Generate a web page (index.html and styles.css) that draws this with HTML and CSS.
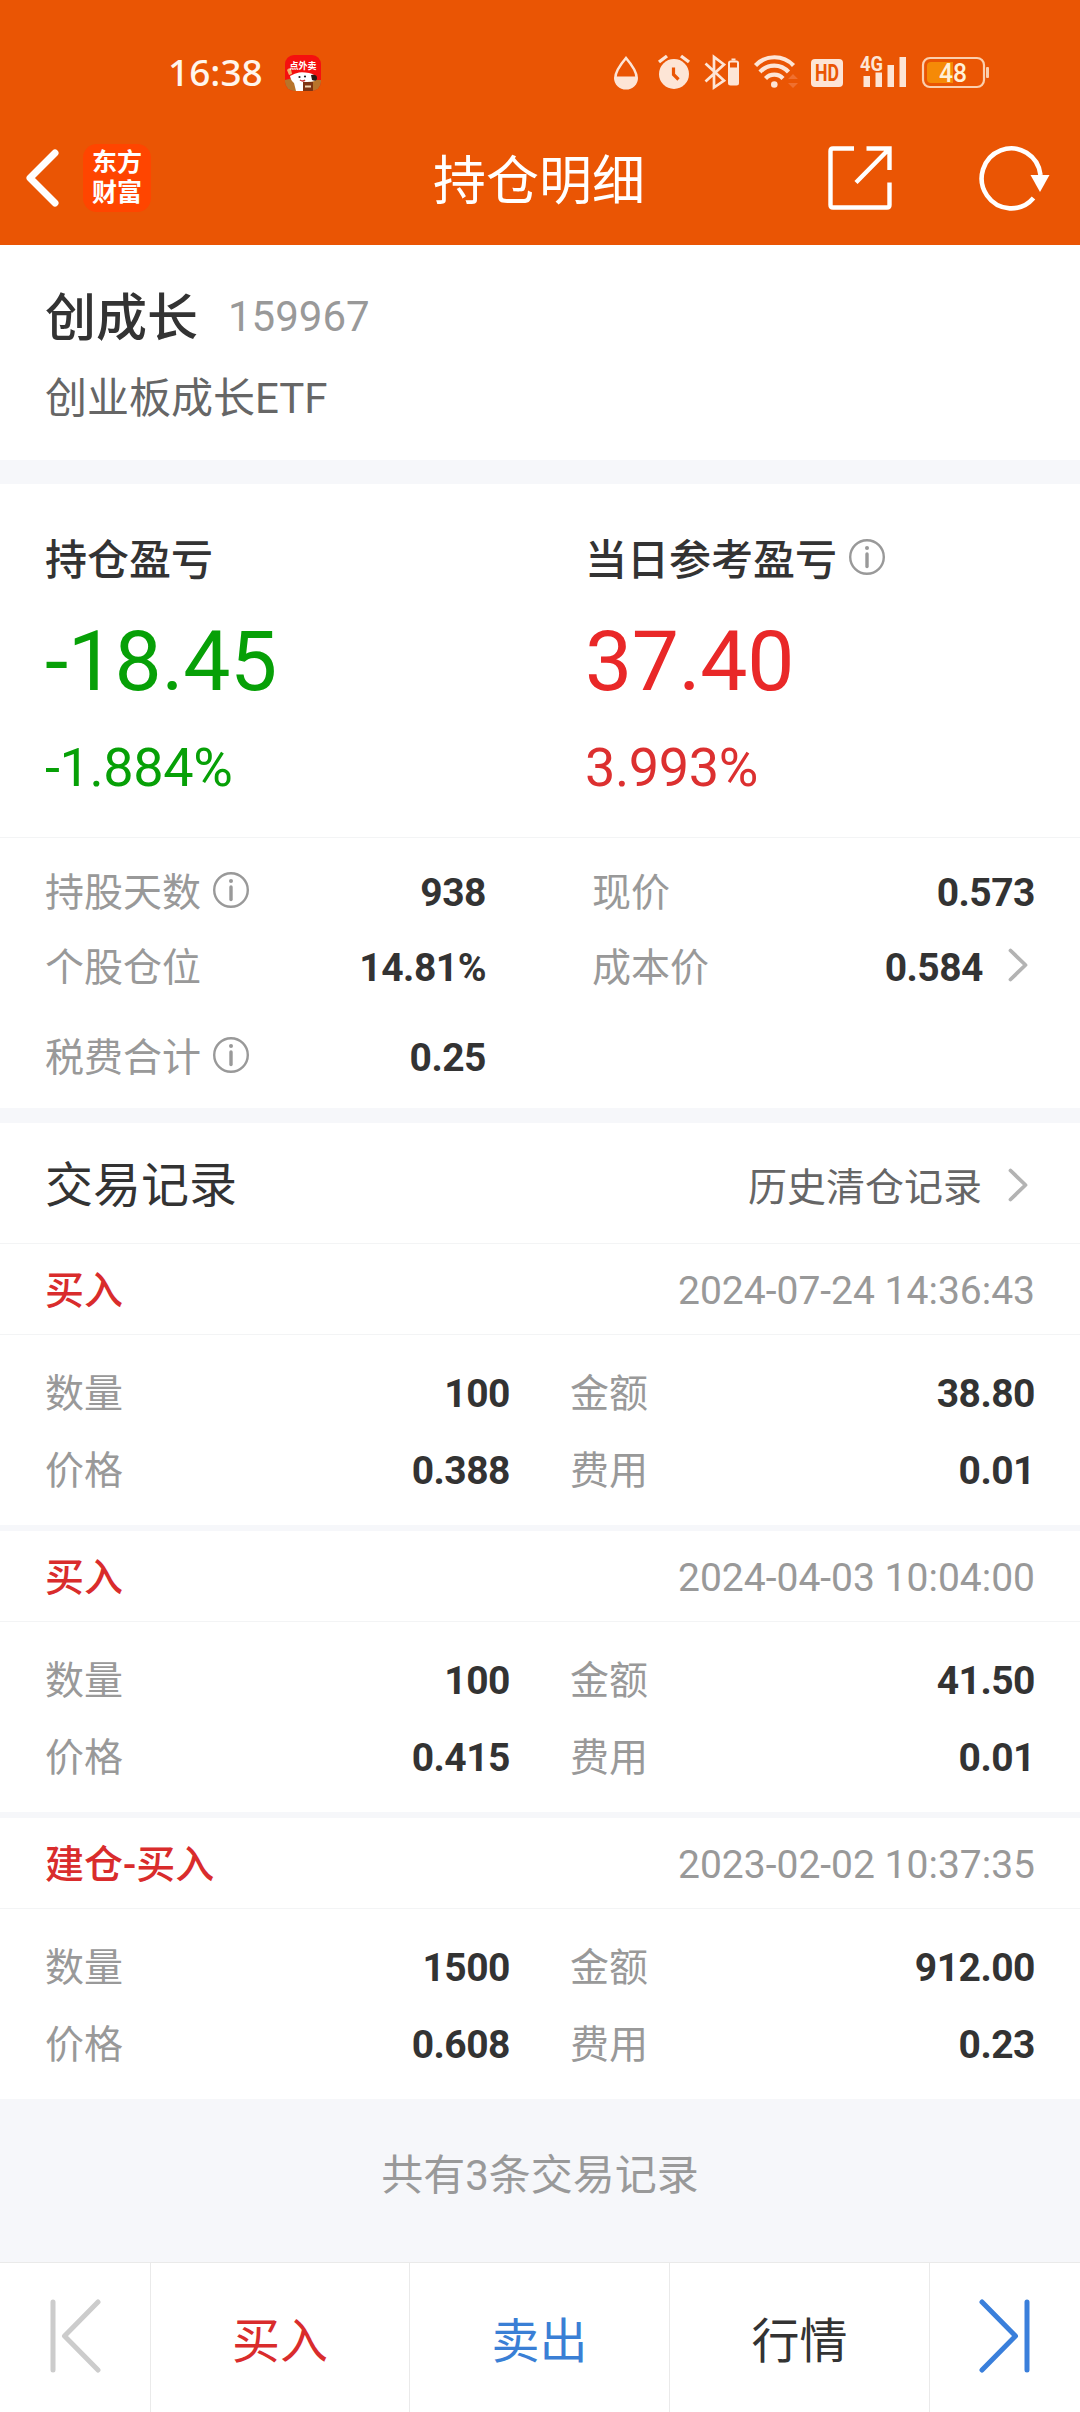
FILE: index.html
```
<!DOCTYPE html>
<html lang="zh-CN">
<head>
    <meta charset="UTF-8">
    <meta name="viewport" content="width=device-width, initial-scale=1.0">
    <title>持仓明细</title>
    <link rel="stylesheet" href="styles.css">
</head>
<body>
    <svg class="sprite" width="0" height="0">
        <symbol id="icon-info" viewBox="0 0 36 36">
            <circle cx="18" cy="18" r="16.8" fill="none" stroke="currentColor" stroke-width="2.4"/>
            <circle cx="18" cy="9" r="2" fill="currentColor"/>
            <path d="M18 15v12.5" stroke="currentColor" stroke-width="3.4" stroke-linecap="round"/>
        </symbol>
        <symbol id="icon-arrow" viewBox="0 0 20 34">
            <path d="M2.5 2.5L17.5 17L2.5 31.5" fill="none" stroke="currentColor" stroke-width="3.8" stroke-linecap="round" stroke-linejoin="round"/>
        </symbol>
    </svg>

    <header class="header">
        <div class="status-bar">
            <span class="time">16:38</span>
            <svg class="app-badge" width="36" height="36" viewBox="0 0 36 36">
                <defs>
                    <clipPath id="badge"><rect width="36" height="36" rx="9"/></clipPath>
                </defs>
                <g clip-path="url(#badge)">
                    <rect width="36" height="36" fill="#f5100f"/>
                    <path d="M0 25q8-3 14 0h22v11H0z" fill="#b8742a"/>
                    <path d="M2 15q2-3 4-1l1 5-3 1z" fill="#f2b36b"/>
                    <path d="M5 21q5-3 9-3.500t10 .500 7 5l-1 3q-4 1-8 1l-4 9h-7l-2-8q-3-2-4-7z" fill="#fff"/>
                    <path d="M26 20q6-1 6 3t-5 2z" fill="#2c1a16"/>
                    <circle cx="14.500" cy="22" r="1.100" fill="#222"/>
                    <circle cx="20" cy="21.500" r="1.100" fill="#222"/>
                    <path d="M15 25q3 2 5 0" stroke="#c33" stroke-width="1.500" fill="none"/>
                    <rect x="18" y="27" width="10" height="9" fill="#7d3412"/>
                    <path d="M20 31.500h6" stroke="#f1d6b0" stroke-width="2"/>
                    <text x="18" y="13.500" class="badge-text">点外卖</text>
                </g>
            </svg>
            <div class="status-icons">
                <svg width="42" height="44" viewBox="0 0 42 44">
                    <path d="M20 8Q9.300 20.500 9.300 28a10.700 10.300 0 0 0 21.400 0Q30.700 20.500 20 8z" fill="none" stroke="currentColor" stroke-width="2.600"/>
                    <path d="M9 26.500h22q0 11.800-11 11.800t-11-11.800z" fill="currentColor"/>
                </svg>
                <svg width="49" height="44" viewBox="0 0 49 44">
                    <circle cx="26" cy="24" r="15" fill="currentColor"/>
                    <path d="M11 12l8-6M41 12l-8-6" stroke="currentColor" stroke-width="3.400"/>
                    <path d="M25.500 17.500v7l5 5" fill="none" stroke="#ea5504" stroke-width="3.200"/>
                </svg>
                <svg width="50" height="44" viewBox="0 0 50 44">
                    <path d="M8.500 13.500L27 30.500 17 37.500V7l10 7.500L8.500 31.500" fill="none" stroke="currentColor" stroke-width="2.700"/>
                    <rect x="32" y="11.500" width="9" height="23" rx="1.500" fill="none" stroke="currentColor" stroke-width="2"/>
                    <path d="M32 17.500h9v17h-9zM34.500 8.500h4v2h-4z" fill="currentColor"/>
                </svg>
                <svg width="58" height="44" viewBox="0 0 58 44">
                    <g fill="none" stroke="currentColor" stroke-width="4.200">
                        <path d="M8.500 15.500a26 26 0 0 1 38 0"/>
                        <path d="M13 22a19 19 0 0 1 28.500 0"/>
                        <path d="M18.500 28.500a12 12 0 0 1 17.500 0"/>
                    </g>
                    <circle cx="27.300" cy="34.500" r="3.300" fill="currentColor"/>
                    <path d="M41 29l5-5 5 5zM41 33l5 5 5-5z" fill="#f0702f"/>
                </svg>
                <svg width="46" height="44" viewBox="0 0 46 44">
                    <rect x="6" y="9" width="32" height="28" rx="4" fill="currentColor"/>
                    <text x="10" y="31" class="hd-text" textLength="24" lengthAdjust="spacingAndGlyphs">HD</text>
                </svg>
                <svg width="63" height="44" viewBox="0 0 63 44">
                    <path d="M12.500 26h6.500v11h-6.500zM24.500 22.500h6.500V37h-6.500zM36.500 15h6.500v22h-6.500zM48.500 7h6.500v30h-6.500z" fill="currentColor"/>
                    <text x="9" y="20.500" class="net-text" textLength="23" lengthAdjust="spacingAndGlyphs">4G</text>
                </svg>
                <svg width="82" height="44" viewBox="0 0 82 44">
                    <rect x="9" y="8" width="61" height="29" rx="7" fill="none" stroke="#fbcfae" stroke-width="2.200"/>
                    <path d="M17 12h22v21H17q-4 0-4-4V16q0-4 4-4z" fill="#f58a07"/>
                    <rect x="72" y="17" width="3" height="11" rx="1" fill="#fbcfae"/>
                    <text x="25" y="31.500" class="battery-text" textLength="28" lengthAdjust="spacingAndGlyphs">48</text>
                </svg>
            </div>
        </div>
        <div class="nav-bar">
            <div class="nav-left">
                <svg width="34" height="58" viewBox="0 0 34 58">
                    <path d="M30 4L5 29l25 25" fill="none" stroke="#fff" stroke-width="7" stroke-linecap="round" stroke-linejoin="round"/>
                </svg>
                <div class="logo">东方<br>财富</div>
            </div>
            <h1>持仓明细</h1>
            <div class="nav-right">
                <svg width="64" height="64" viewBox="0 0 64 64">
                    <path d="M26 2.500H5q-2.500 0-2.500 2.500v54q0 2.500 2.500 2.500h54q2.500 0 2.500-2.500V36.500M38.500 2.500h23V24M61 3L28 36.500" fill="none" stroke="#fff" stroke-width="4.400"/>
                </svg>
                <svg width="72" height="66" viewBox="0 0 72 66">
                    <path d="M54.500 53A29.500 30 0 1 1 61.500 30" fill="none" stroke="#fff" stroke-width="4.600"/>
                    <path d="M51.500 30h19L61 47z" fill="#fff"/>
                </svg>
            </div>
        </div>
    </header>

    <section class="stock">
        <div class="stock-title">
            <h2>创成长</h2>
            <span>159967</span>
        </div>
        <p>创业板成长ETF</p>
    </section>

    <section class="profit">
        <div class="profit-item green">
            <h3>持仓盈亏</h3>
            <p class="amount">-18.45</p>
            <p class="percent">-1.884%</p>
        </div>
        <div class="profit-item red">
            <h3>当日参考盈亏<svg class="info"><use href="#icon-info"/></svg></h3>
            <p class="amount">37.40</p>
            <p class="percent">3.993%</p>
        </div>
    </section>

    <section class="details">
        <div class="detail"><span>持股天数</span><svg class="info"><use href="#icon-info"/></svg><b>938</b></div>
        <div class="detail"><span>现价</span><b>0.573</b></div>
        <div class="detail"><span>个股仓位</span><b>14.81%</b></div>
        <div class="detail"><span>成本价</span><b>0.584</b><svg class="arrow"><use href="#icon-arrow"/></svg></div>
        <div class="detail last"><span>税费合计</span><svg class="info"><use href="#icon-info"/></svg><b>0.25</b></div>
    </section>

    <section class="trades">
        <div class="trades-header">
            <h2>交易记录</h2>
            <a>历史清仓记录<svg class="arrow"><use href="#icon-arrow"/></svg></a>
        </div>

        <div class="trade">
            <div class="trade-head"><b>买入</b><time>2024-07-24 14:36:43</time></div>
            <div class="trade-body">
                <div class="cell"><span>数量</span><b>100</b></div>
                <div class="cell"><span>金额</span><b>38.80</b></div>
                <div class="cell"><span>价格</span><b>0.388</b></div>
                <div class="cell"><span>费用</span><b>0.01</b></div>
            </div>
        </div>

        <div class="trade">
            <div class="trade-head"><b>买入</b><time>2024-04-03 10:04:00</time></div>
            <div class="trade-body">
                <div class="cell"><span>数量</span><b>100</b></div>
                <div class="cell"><span>金额</span><b>41.50</b></div>
                <div class="cell"><span>价格</span><b>0.415</b></div>
                <div class="cell"><span>费用</span><b>0.01</b></div>
            </div>
        </div>

        <div class="trade">
            <div class="trade-head"><b>建仓-买入</b><time>2023-02-02 10:37:35</time></div>
            <div class="trade-body">
                <div class="cell"><span>数量</span><b>1500</b></div>
                <div class="cell"><span>金额</span><b>912.00</b></div>
                <div class="cell"><span>价格</span><b>0.608</b></div>
                <div class="cell"><span>费用</span><b>0.23</b></div>
            </div>
        </div>
    </section>

    <p class="total">共有3条交易记录</p>

    <nav class="tab-bar">
        <a class="prev">
            <svg width="52" height="74" viewBox="0 0 52 74">
                <path d="M4 3v68M49 3L15.500 37 49 71" fill="none" stroke="#ccc" stroke-width="5" stroke-linecap="round" stroke-linejoin="round"/>
            </svg>
        </a>
        <a class="tab buy">买入</a>
        <a class="tab sell">卖出</a>
        <a class="tab">行情</a>
        <a class="next">
            <svg width="52" height="74" viewBox="0 0 52 74">
                <path d="M48 3v68M3 3l33.500 34L3 71" fill="none" stroke="#3a7fdb" stroke-width="5" stroke-linecap="round" stroke-linejoin="round"/>
            </svg>
        </a>
    </nav>
</body>
</html>
```
FILE: styles.css
```
* {
    box-sizing: border-box;
    margin: 0;
    padding: 0;
}
body {
    display: flex;
    flex-direction: column;
    width: 1080px;
    height: 2412px;
    font-family: Roboto, "Noto Sans CJK SC", sans-serif;
    font-size: 39px;
    line-height: 60px;
    color: #333;
    background-color: #f6f7fa;
}
svg {
    display: block;
    flex-shrink: 0;
}
.sprite {
    display: none;
}
h1, h2, h3 {
    font-weight: 400;
}
.header {
    height: 245px;
    background-color: #ea5504;
    color: #fff;
}
.status-bar {
    display: flex;
    align-items: center;
    height: 110px;
    padding: 34px 84px 0 168px;
}
.time {
    width: 117px;
    font-family: "Noto Sans", sans-serif;
    font-weight: 500;
    font-size: 37px;
    line-height: 40px;
    color: #fff6ec;
}
.app-badge {
    margin-top: 2px;
}
.badge-text {
    font-size: 9px;
    font-weight: 700;
    fill: #fff;
    text-anchor: middle;
}
.status-icons {
    display: flex;
    margin-left: auto;
    color: #fde5d6;
}
.hd-text {
    font-size: 23px;
    font-weight: 700;
    fill: #ea5504;
}
.net-text {
    font-size: 21px;
    font-weight: 700;
    fill: #fde5d6;
}
.battery-text {
    font-size: 25px;
    font-weight: 500;
    fill: #fff0d8;
}
.nav-bar {
    display: grid;
    grid-template-columns: 1fr auto 1fr;
    align-items: center;
    height: 135px;
}
.nav-bar h1 {
    font-size: 53px;
    line-height: 64px;
    padding: 8px 2px 0 0;
}
.nav-left {
    display: flex;
    align-items: center;
    padding-left: 26px;
}
.nav-left svg {
    margin-left: -1px;
}
.logo {
    width: 68px;
    height: 68px;
    margin-left: 24px;
    padding-top: 4px;
    border-radius: 14px;
    background-color: #ff4500;
    font-size: 25px;
    font-weight: 700;
    line-height: 30px;
    text-align: center;
}
.nav-right {
    display: flex;
    justify-content: flex-end;
    align-items: center;
    gap: 87px;
    padding-right: 29px;
}
.stock {
    height: 215px;
    padding: 44px 45px 0;
    background-color: #fff;
}
.stock-title {
    display: flex;
    align-items: center;
    height: 60px;
}
.stock h2 {
    font-size: 51px;
    font-weight: 500;
    line-height: 60px;
}
.stock-title span {
    margin-left: 30px;
    font-size: 42px;
    line-height: 56px;
    padding-bottom: 4px;
    color: #999;
}
.stock p {
    margin-top: 20px;
    font-size: 42px;
    color: #666;
}
.profit {
    display: grid;
    grid-template-columns: 540px 1fr;
    height: 354px;
    margin-top: 24px;
    padding: 47px 45px 0;
    border-bottom: 1px solid #f3f4f5;
    background-color: #fff;
}
.profit h3 {
    display: flex;
    align-items: center;
    height: 60px;
    font-size: 42px;
    font-weight: 500;
    color: #333;
}
.info {
    width: 36px;
    height: 36px;
    margin: 0 0 6px 12px;
    color: #999;
}
.profit .info {
    margin-bottom: 8px;
}
.amount {
    margin-top: 21px;
    font-size: 84px;
    line-height: 100px;
    letter-spacing: -0.4px;
}
.percent {
    margin-top: 22px;
    font-size: 54px;
    line-height: 68px;
    letter-spacing: -0.4px;
}
.green {
    color: #07a007;
}
.red {
    color: #e92828;
}
.red .percent {
    color: #dc3030;
}
.details {
    display: grid;
    grid-template-columns: 441px 443px;
    column-gap: 106px;
    grid-auto-rows: 75px;
    height: 270px;
    padding: 17px 45px 0;
    background-color: #fff;
}
.detail {
    display: flex;
    align-items: center;
}
.detail.last {
    margin-top: 15px;
    height: 75px;
}
.detail span, .cell span {
    color: #999;
}
.detail b, .cell b {
    margin-left: auto;
    font-weight: 700;
    letter-spacing: -0.5px;
}
.arrow {
    width: 20px;
    height: 34px;
    margin: 0 7px 6px 25px;
    color: #b3b3b3;
}
.trades-header {
    display: flex;
    justify-content: space-between;
    align-items: center;
    height: 121px;
    margin-top: 15px;
    padding: 6px 45px 0;
    border-bottom: 1px solid #f3f4f5;
    background-color: #fff;
}
.trades-header h2 {
    font-size: 48px;
}
.trades-header a {
    display: flex;
    align-items: center;
    padding-top: 4px;
    color: #666;
}
.trades-header .arrow {
    margin-left: 26px;
}
.trade {
    height: 281px;
    margin-bottom: 6px;
    background-color: #fff;
}
.trade:last-child {
    margin-bottom: 0;
}
.trade-head {
    display: flex;
    justify-content: space-between;
    align-items: center;
    height: 91px;
    padding: 4px 45px 0;
    border-bottom: 1px solid #f3f4f5;
    color: #999;
}
.trade-head b {
    font-weight: 500;
    color: #d92c2c;
}
.trade-body {
    display: grid;
    grid-template-columns: 465px 465px;
    column-gap: 60px;
    grid-auto-rows: 77px;
    padding: 20px 45px 0;
}
.cell {
    display: flex;
    align-items: center;
}
.total {
    height: 163px;
    padding-top: 46px;
    font-size: 42px;
    line-height: 62px;
    text-align: center;
    color: #999;
}
.tab-bar {
    display: grid;
    grid-template-columns: 151px 259px 260px 260px 150px;
    height: 150px;
    border-top: 1px solid #eaeaea;
    background-color: #fff;
}
.tab-bar a {
    display: flex;
    justify-content: center;
    align-items: center;
    font-size: 48px;
    border-right: 1px solid #eaeaea;
}
.tab-bar .prev, .tab-bar .next {
    padding-bottom: 4px;
}
.tab-bar .tab {
    padding-top: 8px;
}
.tab-bar .buy {
    color: #d92c2c;
}
.tab-bar .sell {
    color: #3a7fd5;
}
.tab-bar .next {
    border-right: none;
}
```
